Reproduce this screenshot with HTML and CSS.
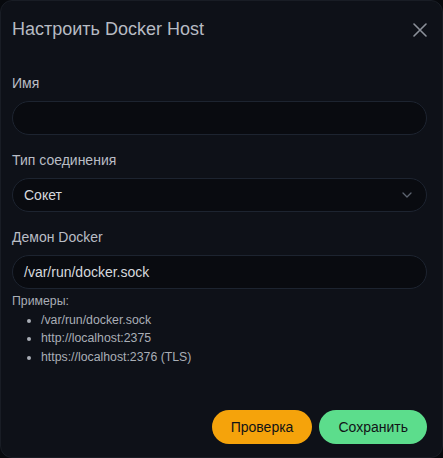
FILE: index.html
```html
<!DOCTYPE html>
<html lang="ru">
<head>
<meta charset="utf-8">
<title>Настроить Docker Host</title>
<link rel="stylesheet" href="styles.css">
</head>
<body>
<div class="dialog">
  <div class="header">
    <h2 class="title">Настроить Docker Host</h2>
    <button class="close" aria-label="Закрыть">
      <svg width="14" height="14" viewBox="0 0 14 14"><path d="M1 1 L13 13 M13 1 L1 13" stroke="#8b9099" stroke-width="1.6" stroke-linecap="round" fill="none"/></svg>
    </button>
  </div>
  <div class="field">
    <label class="label">Имя</label>
    <div class="input"></div>
  </div>
  <div class="field">
    <label class="label">Тип соединения</label>
    <div class="input select">
      <span>Сокет</span>
      <svg width="10" height="6" viewBox="0 0 10 6"><path d="M1 1 L5 5 L9 1" stroke="#5d6470" stroke-width="1.3" fill="none" stroke-linecap="round" stroke-linejoin="round"/></svg>
    </div>
  </div>
  <div class="field last">
    <label class="label">Демон Docker</label>
    <div class="input"><span>/var/run/docker.sock</span></div>
  </div>
  <div class="examples">
    <div>Примеры:</div>
    <ul>
      <li>/var/run/docker.sock</li>
      <li>http://localhost:2375</li>
      <li>https://localhost:2376 (TLS)</li>
    </ul>
  </div>
  <div class="footer">
    <button class="btn btn-test">Проверка</button>
    <button class="btn btn-save">Сохранить</button>
  </div>
</div>
</body>
</html>
```
FILE: styles.css
```css
html, body {
  margin: 0;
  padding: 0;
  background: #07090d;
}
body {
  font-family: "Liberation Sans", Arial, sans-serif;
}
.dialog {
  box-sizing: border-box;
  width: 443px;
  height: 458px;
  background: #0e1118;
  border: 1px solid #191d25;
  border-radius: 12px;
  padding: 0 15px 0 11px;
  display: flex;
  flex-direction: column;
}
.header {
  display: flex;
  align-items: center;
  justify-content: space-between;
  margin-top: 14px;
  height: 28px;
}
.title {
  margin: 0;
  font-size: 18px;
  font-weight: normal;
  line-height: 28px;
  color: #b7bbc3;
}
.close {
  background: none;
  border: none;
  padding: 0;
  width: 14px;
  height: 14px;
  display: flex;
  margin-top: 1px;
}
.field {
  display: flex;
  flex-direction: column;
  margin-top: 15px;
}
.header + .field {
  margin-top: 30px;
}
.label {
  font-size: 14px;
  line-height: 20px;
  color: #b9bdc5;
  margin-bottom: 8px;
}
.input {
  box-sizing: border-box;
  height: 34px;
  border: 1px solid #1d2430;
  border-radius: 17px;
  background: #090b10;
  display: flex;
  align-items: center;
  justify-content: space-between;
  padding: 0 14px 0 11px;
  font-size: 14px;
  color: #d6d9de;
}
.examples {
  margin-top: 3px;
  font-size: 12.3px;
  line-height: 18.5px;
  color: #a9aeb6;
}
.examples ul {
  margin: 0;
  padding-left: 29px;
}
.footer {
  margin-top: auto;
  margin-bottom: 13px;
  display: flex;
  justify-content: flex-end;
  gap: 7px;
}
.btn {
  height: 34px;
  border: none;
  border-radius: 17px;
  padding: 0 19px;
  font-family: "Liberation Sans", Arial, sans-serif;
  font-size: 14px;
  color: #111317;
}
.btn-test {
  background: #f5a30b;
}
.btn-save {
  background: #5cdd8c;
}
```
